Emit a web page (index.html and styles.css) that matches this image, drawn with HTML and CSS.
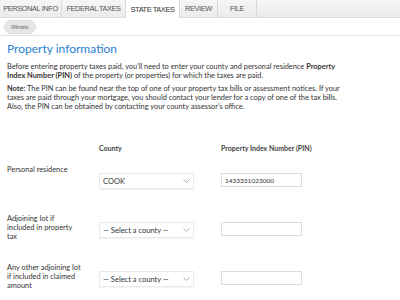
FILE: index.html
```html
<!DOCTYPE html>
<html>
<head>
<meta charset="utf-8">
<link rel="stylesheet" href="styles.css">
</head>
<body>
<div class="tabs">
  <div class="tab t1">PERSONAL INFO</div>
  <div class="tab t2">FEDERAL TAXES</div>
  <div class="tab t3 active">STATE TAXES</div>
  <div class="tab t4">REVIEW</div>
  <div class="tab t5">FILE</div>
</div>
<div class="subbar"><span class="pill">Illinois</span></div>
<div class="content">
  <h1>Property information</h1>
  <p>Before entering property taxes paid, you'll need to enter your county and personal residence <b>Property</b> <b>Index Number (PIN)</b> of the property (or properties) for which the taxes are paid.</p>
  <p><b>Note:</b> The PIN can be found near the top of one of your property tax bills or assessment notices. If your taxes are paid through your mortgage, you should contact your lender for a copy of one of the tax bills. Also, the PIN can be obtained by contacting your county assessor's office.</p>
  <div class="grid">
    <div class="hd"></div>
    <div class="hd">County</div>
    <div class="hd">Property Index Number (PIN)</div>

    <div class="lbl">Personal residence</div>
    <div class="sel"><span>COOK</span><svg width="7" height="4" viewBox="0 0 7 4"><path d="M0.5 0.5 L3.5 3.5 L6.5 0.5" fill="none" stroke="#999" stroke-width="0.8"/></svg></div>
    <div class="inp">1433331023000</div>

    <div class="lbl">Adjoining lot if<br>included in property<br>tax</div>
    <div class="sel"><span>— Select a county —</span><svg width="7" height="4" viewBox="0 0 7 4"><path d="M0.5 0.5 L3.5 3.5 L6.5 0.5" fill="none" stroke="#999" stroke-width="0.8"/></svg></div>
    <div class="inp"></div>

    <div class="lbl">Any other adjoining lot<br>if included in claimed<br>amount</div>
    <div class="sel"><span>— Select a county —</span><svg width="7" height="4" viewBox="0 0 7 4"><path d="M0.5 0.5 L3.5 3.5 L6.5 0.5" fill="none" stroke="#999" stroke-width="0.8"/></svg></div>
    <div class="inp"></div>
  </div>
</div>
</body>
</html>
```
FILE: styles.css
```css
html, body { margin: 0; padding: 0; background: #fff; }
body { font-family: Lato, "Open Sans", sans-serif; color: #333; width: 400px; height: 300px; overflow: hidden; }
.tabs { display: flex; height: 17px; background: linear-gradient(#f6f6f6, #ebebeb); border-bottom: 1px solid #dedede; }
.tab { font-family: "Liberation Sans", Arial, sans-serif; font-size: 7.4px; letter-spacing: -0.4px; color: #555; white-space: nowrap; display: flex; align-items: center; justify-content: center; border-right: 1px solid #d9d9d9; box-sizing: border-box; height: 17px; }
.t1 { width: 62px; }
.t2 { width: 64px; }
.t3 { width: 54px; }
.t4 { width: 38px; }
.t5 { width: 39px; }
.tab.active { background: #fff; color: #333; height: 18px; }
.subbar { height: 17px; display: flex; align-items: center; padding-left: 4px; border-bottom: 1px solid #e6e6e6; }
.pill { font-size: 6.3px; color: #666; background: #e6e6e6; border-radius: 7px; padding: 2px 6px 3px; border: 1px solid #e0e0e0; }
.content { padding: 0 7px; }
h1 { font-size: 12px; font-weight: 400; color: #2b80d2; margin: 5px 0 6px; }
p { font-size: 7.4px; line-height: 9px; margin: 0 0 4px; color: #333; max-width: 338px; }
b { font-weight: 700; }
.grid { display: grid; grid-template-columns: 92px 122px 120px; margin-top: 33px; }
.hd { font-size: 7px; font-weight: 700; color: #444; height: 21px; }
.lbl { font-size: 7.4px; line-height: 9px; color: #333; height: 49px; width: 84px; white-space: nowrap; }
.sel { width: 95px; height: 16px; border: 1px solid #eaeaea; box-shadow: 0 1px 1px rgba(0,0,0,0.04); display: flex; align-items: center; justify-content: space-between; padding: 0 3px 0 3px; box-sizing: border-box; font-size: 7.5px; color: #333; margin-top: 8px; }
.inp { width: 81px; height: 14px; border: 1px solid #dcdcdc; box-sizing: border-box; font-size: 6.5px; padding: 0 3px; display: flex; align-items: center; color: #333; margin-top: 8px; }
```
